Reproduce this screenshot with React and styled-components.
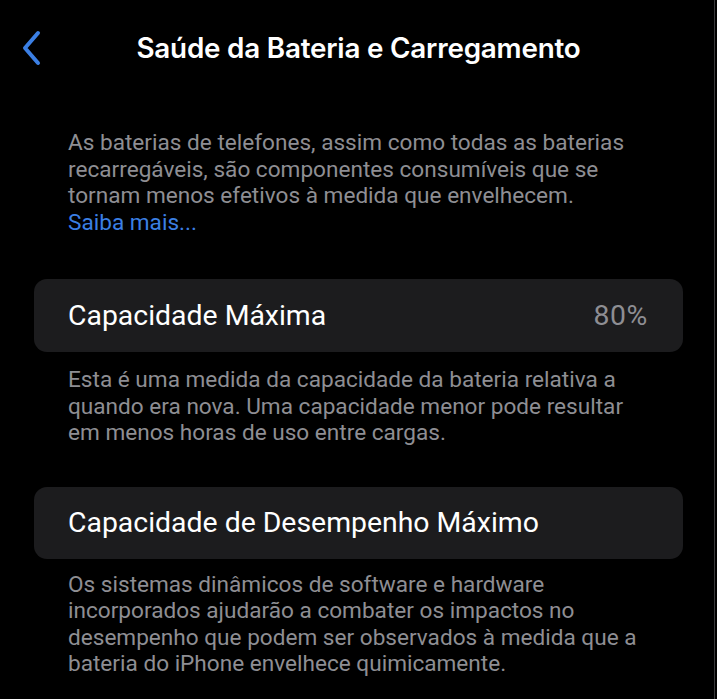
import React from "react";
import styled, { createGlobalStyle } from "styled-components";

const Global = createGlobalStyle`
  html, body { margin: 0; padding: 0; background: #000; }
  body { font-family: Roboto, "Liberation Sans", sans-serif; -webkit-font-smoothing: antialiased; }
`;

const Page = styled.div`
  width: 717px;
  min-height: 699px;
  background: #000;
  box-shadow: inset -2px 0 0 #000, inset -3px 0 0 #3a3a3c;
  box-sizing: border-box;
  display: flex;
  flex-direction: column;
`;

const NavBar = styled.header`
  position: relative;
  height: 96px;
  display: flex;
  align-items: center;
  justify-content: center;
`;

const BackButton = styled.button`
  position: absolute;
  left: 18px;
  top: 28px;
  width: 28px;
  height: 40px;
  padding: 0;
  border: 0;
  background: transparent;
  display: flex;
  align-items: center;
  justify-content: center;
`;

const Title = styled.h1`
  margin: 0;
  color: #fff;
  font-family: Inter, Roboto, sans-serif;
  font-size: 27.8px;
  font-weight: 600;
  letter-spacing: -0.2px;
`;

const Content = styled.main`
  display: flex;
  flex-direction: column;
  padding: 34px 34px 0 34px;
`;

const Footnote = styled.p`
  margin: ${(p) => p.$mt || 0}px 0 0 0;
  padding: 0 34px;
  color: #8e8e93;
  font-size: 22.6px;
  line-height: 26.5px;
`;

const Link = styled.a`
  color: #3b7fe4;
  text-decoration: none;
`;

const Card = styled.div`
  margin-top: ${(p) => p.$mt}px;
  height: ${(p) => p.$h}px;
  background: #1c1c1e;
  border-radius: 13px;
  display: flex;
  align-items: center;
  justify-content: space-between;
  padding: 0 35px 0 34px;
  box-sizing: border-box;
`;

const Label = styled.span`
  color: #fff;
  font-size: 28.4px;
`;

const Value = styled.span`
  color: #8e8e93;
  font-size: 28.4px;
  letter-spacing: 0.6px;
`;

export default function App() {
  return (
    <>
      <Global />
      <Page>
        <NavBar>
          <BackButton aria-label="Voltar">
            <svg width="28" height="40" viewBox="0 0 28 40">
              <polyline
                points="20,5 7,20 20,35"
                fill="none"
                stroke="#3b7fe4"
                strokeWidth="4"
                strokeLinecap="round"
                strokeLinejoin="round"
              />
            </svg>
          </BackButton>
          <Title>Saúde da Bateria e Carregamento</Title>
        </NavBar>
        <Content>
          <Footnote>
            As baterias de telefones, assim como todas as baterias
            recarregáveis, são componentes consumíveis que se tornam menos
            efetivos à medida que envelhecem.
            <br />
            <Link href="#">Saiba mais...</Link>
          </Footnote>
          <Card $mt={43} $h={73}>
            <Label>Capacidade Máxima</Label>
            <Value>80%</Value>
          </Card>
          <Footnote $mt={15}>
            Esta é uma medida da capacidade da bateria relativa a quando era
            nova. Uma capacidade menor pode resultar em menos horas de uso
            entre cargas.
          </Footnote>
          <Card $mt={40} $h={72}>
            <Label>Capacidade de Desempenho Máximo</Label>
          </Card>
          <Footnote $mt={13}>
            Os sistemas dinâmicos de software e hardware incorporados ajudarão
            a combater os impactos no desempenho que podem ser observados à
            medida que a bateria do iPhone envelhece quimicamente.
          </Footnote>
        </Content>
      </Page>
    </>
  );
}
